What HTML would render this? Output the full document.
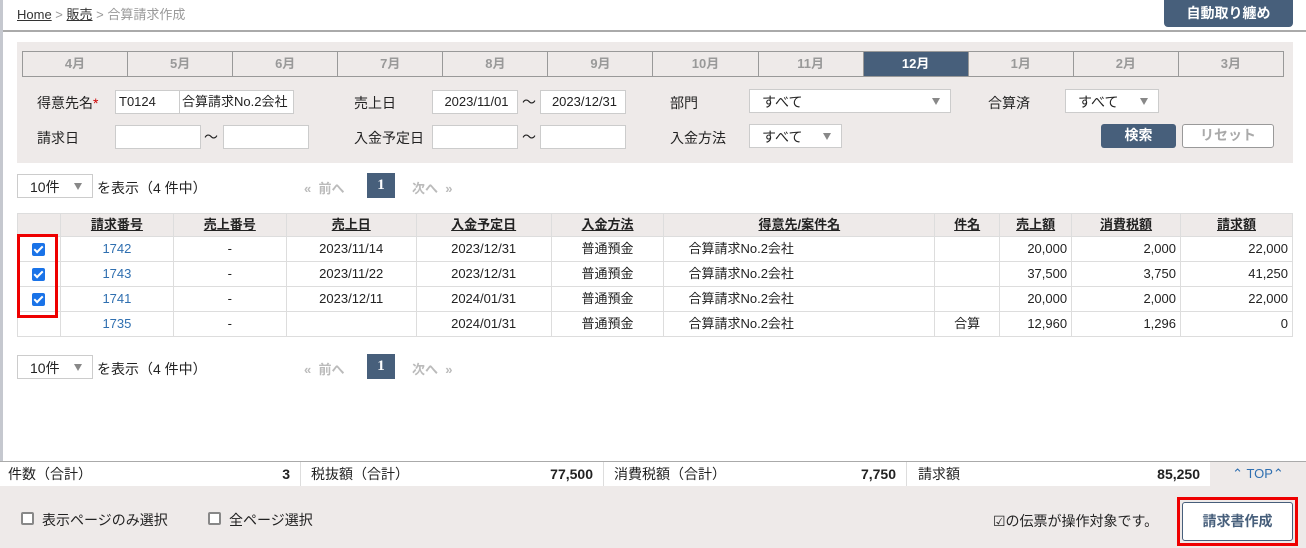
<!DOCTYPE html>
<html><head><meta charset="utf-8"><style>
*{box-sizing:border-box;margin:0;padding:0}
body{width:1306px;height:548px;position:relative;overflow:hidden;background:#fff;font-family:"Liberation Sans","Noto Sans CJK JP",sans-serif;font-size:13px;color:#222}
.a{position:absolute}
.lbl{position:absolute;font-size:14px;color:#222}
.inp{position:absolute;background:#fff;border:1px solid #ccc;height:24px;font-size:13px;line-height:22px;padding-left:3px}
.sel{position:absolute;background:#fff;border:1px solid #ccc;height:24px;font-size:14px;line-height:24px;padding-left:12px}
.sel:after{content:"";position:absolute;right:10px;top:8px;border-left:4px solid transparent;border-right:4px solid transparent;border-top:7px solid #888}
.tabs{position:absolute;left:22px;top:51px;width:1262px;height:26px;display:flex;border:1px solid #999}
.tabs div{flex:1;border-left:1px solid #999;background:#eeeae9;text-align:center;line-height:24px;font-weight:bold;color:#999;font-size:13px}
.tabs div:first-child{border-left:none}
.tabs div.on{background:#475f7b;color:#fff}
table{position:absolute;left:17px;top:213px;width:1276px;border-collapse:collapse;font-size:13px}
td,th{border:1px solid #ddd;height:25px;padding:0 4px;line-height:16px}
th{background:#eeeae9;font-weight:bold;text-decoration:underline;height:23px}
td{background:#fff}
.c{text-align:center}.r{text-align:right}.b{color:#2f6fb0}
.cb{display:inline-block;width:13px;height:13px;background:#1a73e8;border-radius:2px;position:relative;vertical-align:middle}
.cb:after{content:"";position:absolute;left:4px;top:1px;width:3px;height:7px;border:solid #fff;border-width:0 2px 2px 0;transform:rotate(45deg)}
.pg{position:absolute;font-size:13px}
</style></head><body>
<div class="a" style="left:0;top:0;width:3px;height:461px;background:#c5c8cf"></div>
<div class="a" style="left:17px;top:4px;font-size:13px;color:#999"><span style="color:#333;text-decoration:underline">Home</span> &gt; <span style="color:#333;text-decoration:underline">販売</span> &gt; 合算請求作成</div>
<div class="a" style="left:1164px;top:0;width:129px;height:27px;background:#475f7b;border-radius:0 0 4px 4px;color:#fff;font-weight:bold;font-size:14px;text-align:center;line-height:26px">自動取り纏め</div>
<div class="a" style="left:3px;top:30px;width:1303px;height:2px;background:#aaa"></div>
<div class="a" style="left:17px;top:42px;width:1276px;height:121px;background:#eeeae9"></div>
<div class="tabs"><div>4月</div><div>5月</div><div>6月</div><div>7月</div><div>8月</div><div>9月</div><div>10月</div><div>11月</div><div class="on">12月</div><div>1月</div><div>2月</div><div>3月</div></div>
<div class="lbl" style="left:37px;top:93px">得意先名<span style="color:#c00">*</span></div>
<div class="inp" style="left:115px;top:90px;width:65px">T0124</div>
<div class="inp" style="left:179px;top:90px;width:115px;padding-left:2px">合算請求No.2会社</div>
<div class="lbl" style="left:354px;top:93px">売上日</div>
<div class="inp" style="left:432px;top:90px;width:86px;text-align:center">2023/11/01</div>
<div class="lbl" style="left:522px;top:92px">～</div>
<div class="inp" style="left:540px;top:90px;width:86px;text-align:center">2023/12/31</div>
<div class="lbl" style="left:670px;top:93px">部門</div>
<div class="sel" style="left:749px;top:89px;width:202px">すべて</div>
<div class="lbl" style="left:988px;top:93px">合算済</div>
<div class="sel" style="left:1065px;top:89px;width:94px">すべて</div>
<div class="lbl" style="left:37px;top:128px">請求日</div>
<div class="inp" style="left:115px;top:125px;width:86px"></div>
<div class="lbl" style="left:204px;top:127px">～</div>
<div class="inp" style="left:223px;top:125px;width:86px"></div>
<div class="lbl" style="left:354px;top:128px">入金予定日</div>
<div class="inp" style="left:432px;top:125px;width:86px"></div>
<div class="lbl" style="left:522px;top:127px">～</div>
<div class="inp" style="left:540px;top:125px;width:86px"></div>
<div class="lbl" style="left:670px;top:128px">入金方法</div>
<div class="sel" style="left:749px;top:124px;width:93px">すべて</div>
<div class="a" style="left:1101px;top:124px;width:75px;height:24px;background:#475f7b;border-radius:3px;color:#fff;font-weight:bold;text-align:center;line-height:23px;font-size:14px">検索</div>
<div class="a" style="left:1182px;top:124px;width:92px;height:24px;background:#fff;border:1px solid #999;border-radius:3px;color:#aaa;font-weight:bold;text-align:center;line-height:21px;font-size:14px">リセット</div>

<div class="sel" style="left:17px;top:174px;width:76px;height:24px;padding-left:12px">10件</div>
<div class="pg" style="left:97px;top:178px;font-size:14px">を表示（4 件中）</div>
<div class="pg" style="left:304px;top:178px;color:#bbb;font-weight:bold">« &nbsp;前へ</div>
<div class="a" style="left:367px;top:173px;width:28px;height:25px;background:#475f7b;color:#fff;font-family:'Liberation Serif',serif;font-weight:bold;font-size:15px;text-align:center;line-height:25px">1</div>
<div class="pg" style="left:412px;top:178px;color:#bbb;font-weight:bold">次へ &nbsp;»</div>

<table>
<colgroup><col style="width:43px"><col style="width:113px"><col style="width:113px"><col style="width:130px"><col style="width:135px"><col style="width:113px"><col style="width:271px"><col style="width:65px"><col style="width:72px"><col style="width:109px"><col style="width:112px"></colgroup>
<tr><th></th><th>請求番号</th><th>売上番号</th><th>売上日</th><th>入金予定日</th><th>入金方法</th><th>得意先/案件名</th><th>件名</th><th>売上額</th><th>消費税額</th><th>請求額</th></tr>
<tr><td class="c"><span class="cb"></span></td><td class="c b">1742</td><td class="c">-</td><td class="c">2023/11/14</td><td class="c">2023/12/31</td><td class="c">普通預金</td><td style="padding-left:24px">合算請求No.2会社</td><td></td><td class="r">20,000</td><td class="r">2,000</td><td class="r">22,000</td></tr>
<tr><td class="c"><span class="cb"></span></td><td class="c b">1743</td><td class="c">-</td><td class="c">2023/11/22</td><td class="c">2023/12/31</td><td class="c">普通預金</td><td style="padding-left:24px">合算請求No.2会社</td><td></td><td class="r">37,500</td><td class="r">3,750</td><td class="r">41,250</td></tr>
<tr><td class="c"><span class="cb"></span></td><td class="c b">1741</td><td class="c">-</td><td class="c">2023/12/11</td><td class="c">2024/01/31</td><td class="c">普通預金</td><td style="padding-left:24px">合算請求No.2会社</td><td></td><td class="r">20,000</td><td class="r">2,000</td><td class="r">22,000</td></tr>
<tr><td></td><td class="c b">1735</td><td class="c">-</td><td></td><td class="c">2024/01/31</td><td class="c">普通預金</td><td style="padding-left:24px">合算請求No.2会社</td><td class="c">合算</td><td class="r">12,960</td><td class="r">1,296</td><td class="r">0</td></tr>
</table>
<div class="a" style="left:17px;top:234px;width:41px;height:84px;border:3px solid #e00"></div>

<div class="sel" style="left:17px;top:355px;width:76px;height:24px">10件</div>
<div class="pg" style="left:97px;top:359px;font-size:14px">を表示（4 件中）</div>
<div class="pg" style="left:304px;top:359px;color:#bbb;font-weight:bold">« &nbsp;前へ</div>
<div class="a" style="left:367px;top:354px;width:28px;height:25px;background:#475f7b;color:#fff;font-family:'Liberation Serif',serif;font-weight:bold;font-size:15px;text-align:center;line-height:25px">1</div>
<div class="pg" style="left:412px;top:359px;color:#bbb;font-weight:bold">次へ &nbsp;»</div>

<div class="a" style="left:0;top:461px;width:1306px;height:1px;background:#aaa"></div>
<div class="a" style="left:0;top:462px;width:1306px;height:24px;background:#fff;font-size:14px;line-height:24px">
<span class="a" style="left:8px">件数（合計）</span><span class="a" style="left:270px;width:20px;text-align:right;font-weight:bold">3</span>
<span class="a" style="left:300px;top:0;width:1px;height:24px;background:#ddd"></span>
<span class="a" style="left:311px">税抜額（合計）</span><span class="a" style="left:500px;width:93px;text-align:right;font-weight:bold">77,500</span>
<span class="a" style="left:603px;top:0;width:1px;height:24px;background:#ddd"></span>
<span class="a" style="left:614px">消費税額（合計）</span><span class="a" style="left:800px;width:96px;text-align:right;font-weight:bold">7,750</span>
<span class="a" style="left:906px;top:0;width:1px;height:24px;background:#ddd"></span>
<span class="a" style="left:918px">請求額</span><span class="a" style="left:1100px;width:100px;text-align:right;font-weight:bold">85,250</span>
<span class="a" style="left:1210px;top:0;width:96px;height:24px;background:#eeeae9;color:#2f6fb0;text-align:center;font-size:13px">&#8963; TOP&#8963;</span>
</div>
<div class="a" style="left:0;top:486px;width:1306px;height:62px;background:#eeeae9"></div>
<div class="a" style="left:21px;top:512px;width:13px;height:13px;border:2px solid #888;border-radius:2px;background:#fff"></div>
<div class="a" style="left:42px;top:510px;font-size:14px">表示ページのみ選択</div>
<div class="a" style="left:208px;top:512px;width:13px;height:13px;border:2px solid #888;border-radius:2px;background:#fff"></div>
<div class="a" style="left:229px;top:510px;font-size:14px">全ページ選択</div>
<div class="a" style="left:993px;top:511px;font-size:14px">☑の伝票が操作対象です。</div>
<div class="a" style="left:1177px;top:497px;width:121px;height:49px;border:3px solid #e00"></div>
<div class="a" style="left:1182px;top:502px;width:111px;height:39px;background:#fff;border:1px solid #475f7b;border-radius:3px;color:#475f7b;font-weight:bold;font-size:14px;text-align:center;line-height:37px">請求書作成</div>
</body></html>
